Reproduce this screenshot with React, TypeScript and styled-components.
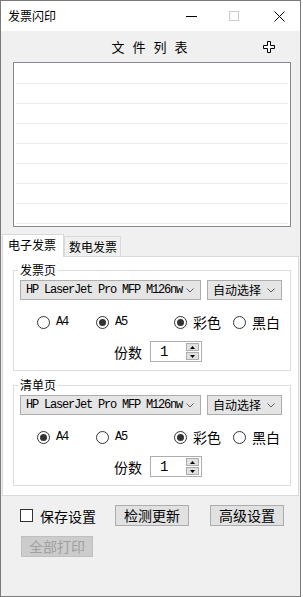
import React from "react";
import styled, { createGlobalStyle } from "styled-components";

const CJK = `"Noto Sans CJK SC", "Noto Sans", sans-serif`;
const MONO = `"Liberation Mono", "Noto Sans CJK SC", monospace`;

const GlobalStyle = createGlobalStyle`
  html, body { margin: 0; padding: 0; background: #fff; }
  body { font-family: ${CJK}; color: #000; }
  * { box-sizing: border-box; }
`;

const Window = styled.div`
  width: 301px;
  height: 597px;
  border: 1px solid #7a7a7a;
  display: flex;
  flex-direction: column;
  background: #f0f0f0;
`;

const TitleBar = styled.div`
  height: 30px;
  flex: none;
  display: flex;
  align-items: center;
  background: #fff;
`;

const Title = styled.span`
  padding-left: 7px;
  font-size: 12px;
  line-height: 14px;
`;

const Controls = styled.div`
  margin-left: auto;
  padding-right: 15px;
  display: flex;
  align-items: center;
`;

const Ctrl = styled.span<{ $ml?: number }>`
  display: flex;
  margin-left: ${({ $ml }) => $ml ?? 0}px;
`;

const Header = styled.div`
  height: 31px;
  flex: none;
  display: grid;
  grid-template-columns: 1fr auto 1fr;
  align-items: center;
`;

const HeaderTitle = styled.span`
  grid-column: 2;
  font-size: 13px;
  line-height: 16px;
  letter-spacing: 8px;
  padding-left: 6px;
`;

const AddButton = styled.span`
  grid-column: 3;
  justify-self: end;
  margin-right: 25px;
  display: flex;
`;

const ListBox = styled.div`
  margin: 0 9px 0 12px;
  height: 165px;
  flex: none;
  border: 1px solid #828790;
  background: #fff;
  padding: 1px 2px 0;
`;

const ListRow = styled.div`
  height: 20px;
  border-bottom: 1px solid #ebebeb;
`;

const TabStrip = styled.div`
  margin: 7px 1px 0;
  display: flex;
  align-items: flex-end;
  flex: none;
`;

const Tab = styled.div<{ $active?: boolean }>`
  position: relative;
  z-index: ${({ $active }) => ($active ? 1 : 0)};
  width: ${({ $active }) => ($active ? 62 : 57)}px;
  height: ${({ $active }) => ($active ? 23 : 20)}px;
  margin-bottom: ${({ $active }) => ($active ? -1 : 0)}px;
  border: 1px solid #d9d9d9;
  border-bottom: none;
  background: ${({ $active }) => ($active ? "#fff" : "#f0f0f0")};
  font-size: 12px;
  line-height: 14px;
  padding: ${({ $active }) => ($active ? "3px 0 0 5px" : "3px 0 0 4px")};
`;

const Panel = styled.div`
  margin: 0 1px;
  border: 1px solid #d9d9d9;
  background: #fff;
  padding-bottom: 9px;
  flex: none;
`;

const Group = styled.fieldset<{ $top: number }>`
  margin: ${({ $top }) => $top}px 7px 0 10px;
  padding: 3px 7px 8px 6px;
  border: 1px solid #dcdcdc;
  min-width: 0;
`;

const Legend = styled.legend`
  font-size: 12px;
  line-height: 14px;
  padding: 0 2px;
  margin-left: -2px;
`;

const ComboRow = styled.div`
  display: flex;
  gap: 6px;
`;

const Combo = styled.div<{ $w: number }>`
  width: ${({ $w }) => $w}px;
  height: 20px;
  border: 1px solid #adadad;
  background: #e5e5e5;
  display: flex;
  align-items: center;
  justify-content: space-between;
  padding: 0 6px 0 5px;
`;

const ComboText = styled.span<{ $mono?: boolean }>`
  white-space: nowrap;
  font-family: ${({ $mono }) => ($mono ? MONO : CJK)};
  font-size: 12px;
  letter-spacing: ${({ $mono }) => ($mono ? -1.2 : 0)}px;
  line-height: 14px;
`;

const RadioRow = styled.div`
  margin-top: 11px;
  height: 22px;
  padding-left: 17px;
  display: grid;
  grid-template-columns: 59px 78px 59px auto;
  align-items: center;
`;

const RadioItem = styled.label`
  display: flex;
  align-items: center;
  gap: 6px;
`;

const RadioDot = styled.span<{ $on?: boolean }>`
  width: 13px;
  height: 13px;
  border-radius: 50%;
  border: 1px solid #333;
  background: #fff;
  display: flex;
  align-items: center;
  justify-content: center;
  &::after {
    content: "";
    width: 7px;
    height: 7px;
    border-radius: 50%;
    background: ${({ $on }) => ($on ? "#333" : "transparent")};
  }
`;

const RadioText = styled.span<{ $mono?: boolean }>`
  font-family: ${({ $mono }) => ($mono ? MONO : CJK)};
  font-size: ${({ $mono }) => ($mono ? 12 : 14)}px;
  letter-spacing: ${({ $mono }) => ($mono ? -1.2 : 0)}px;
  line-height: 16px;
`;

const CopiesRow = styled.div`
  margin-top: 8px;
  padding-left: 94px;
  display: flex;
  align-items: center;
  gap: 8px;
`;

const CopiesLabel = styled.span`
  font-size: 14px;
  line-height: 16px;
`;

const Spin = styled.div`
  width: 52px;
  height: 21px;
  border: 1px solid #adadad;
  background: #fff;
  display: flex;
  align-items: center;
  padding: 0 1px 0 9px;
`;

const SpinValue = styled.span`
  flex: 1;
  font-family: ${MONO};
  font-size: 14px;
  line-height: 16px;
`;

const SpinButtons = styled.div`
  display: flex;
  flex-direction: column;
  gap: 1px;
  margin-right: 1px;
`;

const SpinBtn = styled.span`
  width: 13px;
  height: 8px;
  border: 1px solid #adadad;
  background: #e1e1e1;
  display: flex;
  align-items: center;
  justify-content: center;
`;

const Footer = styled.div`
  padding: 9px 0 0 19px;
`;

const FooterRow = styled.div<{ $top?: number }>`
  display: flex;
  align-items: center;
  margin-top: ${({ $top }) => $top ?? 0}px;
`;

const CheckBox = styled.span`
  width: 13px;
  height: 13px;
  border: 1px solid #333;
  background: #fff;
`;

const CheckLabel = styled.span`
  margin-left: 7px;
  font-size: 14px;
  line-height: 16px;
`;

const Button = styled.button<{ $w: number; $ml: number }>`
  width: ${({ $w }) => $w}px;
  height: 21px;
  margin-left: ${({ $ml }) => $ml}px;
  padding: 0;
  border: 1px solid #adadad;
  background: #e1e1e1;
  font-family: ${CJK};
  font-size: 14px;
  line-height: 17px;
  color: #000;
  &:disabled {
    background: #cccccc;
    border-color: #bfbfbf;
    color: #a0a0a0;
  }
`;

const Chevron = () => (
  <svg width="8" height="5" viewBox="0 0 8 5">
    <path d="M0.5 0.5 L4 4 L7.5 0.5" fill="none" stroke="#606060" strokeWidth="1" />
  </svg>
);

const Triangle = ({ up }: { up?: boolean }) => (
  <svg width="5" height="3" viewBox="0 0 5 3">
    <path d={up ? "M0 3 L2.5 0 L5 3 Z" : "M0 0 L2.5 3 L5 0 Z"} fill="#000" />
  </svg>
);

interface SectionProps {
  title: string;
  top: number;
  size: "A4" | "A5";
}

const PrintSection = ({ title, top, size }: SectionProps) => (
  <Group $top={top}>
    <Legend>{title}</Legend>
    <ComboRow>
      <Combo $w={181}>
        <ComboText $mono>HP LaserJet Pro MFP M126nw</ComboText>
        <Chevron />
      </Combo>
      <Combo $w={75}>
        <ComboText>自动选择</ComboText>
        <Chevron />
      </Combo>
    </ComboRow>
    <RadioRow>
      <RadioItem>
        <RadioDot $on={size === "A4"} />
        <RadioText $mono>A4</RadioText>
      </RadioItem>
      <RadioItem>
        <RadioDot $on={size === "A5"} />
        <RadioText $mono>A5</RadioText>
      </RadioItem>
      <RadioItem>
        <RadioDot $on />
        <RadioText>彩色</RadioText>
      </RadioItem>
      <RadioItem>
        <RadioDot />
        <RadioText>黑白</RadioText>
      </RadioItem>
    </RadioRow>
    <CopiesRow>
      <CopiesLabel>份数</CopiesLabel>
      <Spin>
        <SpinValue>1</SpinValue>
        <SpinButtons>
          <SpinBtn><Triangle up /></SpinBtn>
          <SpinBtn><Triangle /></SpinBtn>
        </SpinButtons>
      </Spin>
    </CopiesRow>
  </Group>
);

const App = () => {
  return (
    <>
      <GlobalStyle />
      <Window>
        <TitleBar>
          <Title>发票闪印</Title>
          <Controls>
            <Ctrl>
              <svg width="11" height="1" viewBox="0 0 11 1">
                <rect width="11" height="1" fill="#000" />
              </svg>
            </Ctrl>
            <Ctrl $ml={32}>
              <svg width="10" height="10" viewBox="0 0 10 10">
                <rect x="0.5" y="0.5" width="9" height="9" fill="none" stroke="#cccccc" />
              </svg>
            </Ctrl>
            <Ctrl $ml={35}>
              <svg width="11" height="11" viewBox="0 0 11 11">
                <path d="M0.5 0.5 L10.5 10.5 M10.5 0.5 L0.5 10.5" stroke="#000" strokeWidth="1" />
              </svg>
            </Ctrl>
          </Controls>
        </TitleBar>

        <Header>
          <HeaderTitle>文件列表</HeaderTitle>
          <AddButton>
            <svg width="12" height="12" viewBox="0 0 12 12">
              <path
                d="M4.5 0.5 H7.5 V4.5 H11.5 V7.5 H7.5 V11.5 H4.5 V7.5 H0.5 V4.5 H4.5 Z"
                fill="#fff"
                stroke="#000"
                strokeWidth="1"
              />
            </svg>
          </AddButton>
        </Header>

        <ListBox>
          {Array.from({ length: 8 }).map((_, i) => (
            <ListRow key={i} />
          ))}
        </ListBox>

        <TabStrip>
          <Tab $active>电子发票</Tab>
          <Tab>数电发票</Tab>
        </TabStrip>
        <Panel>
          <PrintSection title="发票页" top={6} size="A5" />
          <PrintSection title="清单页" top={7} size="A4" />
        </Panel>

        <Footer>
          <FooterRow>
            <CheckBox />
            <CheckLabel>保存设置</CheckLabel>
            <Button $w={74} $ml={19}>检测更新</Button>
            <Button $w={74} $ml={21}>高级设置</Button>
          </FooterRow>
          <FooterRow $top={10}>
            <Button $w={72} $ml={1} disabled>全部打印</Button>
          </FooterRow>
        </Footer>
      </Window>
    </>
  );
};

export default App;
